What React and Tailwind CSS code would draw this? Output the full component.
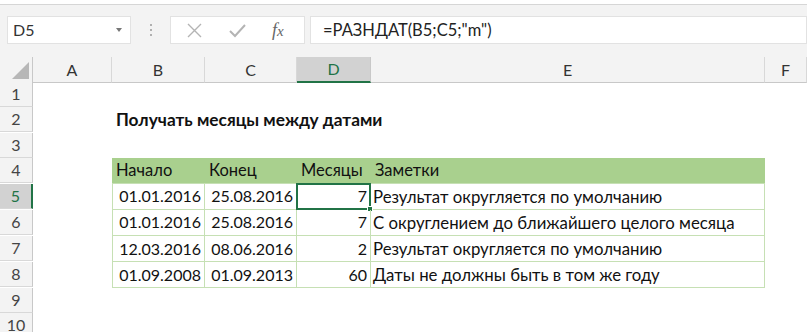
import React from 'react';

const cols = ['A', 'B', 'C', 'D', 'E', 'F'];

const rows = [
  ['01.01.2016', '25.08.2016', '7', 'Результат округляется по умолчанию'],
  ['01.01.2016', '25.08.2016', '7', 'С округлением до ближайшего целого месяца'],
  ['12.03.2016', '08.06.2016', '2', 'Результат округляется по умолчанию'],
  ['01.09.2008', '01.09.2013', '60', 'Даты не должны быть в том же году'],
];

const gridCols = 'grid grid-cols-[33px_79px_93px_92px_74px_394px_42px]';

const RowHeader = ({ n, active }) => (
  <div
    className={`h-[25px] flex items-center justify-center border-b border-[#d8d8d8] text-[16px] ${
      active
        ? 'bg-[#d2d2d2] border-r-2 border-r-[#217346] text-[#217346]'
        : 'bg-[#f3f3f3] border-r border-r-[#c8c8c8] text-[#444]'
    }`}
  >
    {n}
  </div>
);

const FormulaBar = () => (
  <div className="h-[52px] bg-[#f3f3f3] flex items-center pl-[7px] pb-[2px]">
    <div className="w-[124px] h-[28px] bg-white border border-[#e2e2e2] flex items-center justify-between pl-[5px] pr-[8px]">
      <span className="text-[16px] text-[#333]">D5</span>
      <span className="w-0 h-0 border-l-[3px] border-r-[3px] border-t-[4px] border-l-transparent border-r-transparent border-t-[#777]" />
    </div>
    <div className="w-[39px] flex flex-col items-center gap-[3px]">
      <span className="w-[2px] h-[2px] bg-[#b0b0b0]" />
      <span className="w-[2px] h-[2px] bg-[#b0b0b0]" />
      <span className="w-[2px] h-[2px] bg-[#b0b0b0]" />
    </div>
    <div className="w-[135px] h-[28px] bg-white border border-[#e2e2e2] flex items-center pl-[15px] gap-[25px]">
      <svg width="17" height="17" viewBox="0 0 17 17">
        <path d="M2 2 L15 15 M15 2 L2 15" stroke="#b4b4b4" strokeWidth="1.4" fill="none" />
      </svg>
      <svg width="19" height="17" viewBox="0 0 19 17">
        <path d="M2 9 L7 14 L17 3" stroke="#b4b4b4" strokeWidth="2" fill="none" />
      </svg>
      <span className="text-[18px] italic text-[#666] font-['Liberation_Serif',serif] leading-none">
        f<span className="text-[15px]">x</span>
      </span>
    </div>
    <div className="ml-[5px] flex-1 h-[28px] bg-white border border-[#e2e2e2] flex items-center pl-[12px]">
      <span className="text-[16.5px] text-[#222]">=РАЗНДАТ(B5;C5;"m")</span>
    </div>
  </div>
);

const ColumnHeaders = () => (
  <div className={`${gridCols} h-[25px]`}>
    <div className="bg-[#f3f3f3] border-r border-b border-[#c8c8c8] flex items-end justify-end p-[3px]">
      <svg width="17" height="17" viewBox="0 0 17 17">
        <path d="M17 0 L17 17 L0 17 Z" fill="#b7b7b7" />
      </svg>
    </div>
    {cols.map((c) => (
      <div
        key={c}
        className={`flex items-center justify-center text-[16px] border-r ${
          c === 'D'
            ? 'bg-[#d2d2d2] border-b-2 border-b-[#217346] text-[#217346] border-r-[#c8c8c8]'
            : 'bg-[#f3f3f3] border-b border-b-[#c8c8c8] text-[#333] border-r-[#d8d8d8]'
        }`}
      >
        {c}
      </div>
    ))}
  </div>
);

export default function App() {
  return (
    <div className="w-[807px] h-[332px] overflow-hidden bg-white font-['Lato','Noto_Sans',sans-serif]">
      <div className="h-[5px] bg-white border-b border-[#d6d6d6]" />
      <FormulaBar />
      <ColumnHeaders />

      {/* rows 1-3 */}
      <div className={gridCols}>
        <RowHeader n={1} />
        <div className="col-span-6" />
      </div>
      <div className={gridCols}>
        <RowHeader n={2} />
        <div />
        <div className="col-span-5 flex items-center pl-[4px] text-[17.3px] font-bold text-[#111] whitespace-nowrap">
          Получать месяцы между датами
        </div>
      </div>
      <div className={gridCols}>
        <RowHeader n={3} />
        <div className="col-span-6" />
      </div>

      {/* table header */}
      <div className={gridCols}>
        <RowHeader n={4} />
        <div />
        {['Начало', 'Конец', 'Месяцы', 'Заметки'].map((h) => (
          <div
            key={h}
            className="bg-[#a9d08e] flex items-center pl-[4px] text-[16.5px] text-[#111] border-b border-[#c6e0b4] first:border-l"
          >
            {h}
          </div>
        ))}
        <div />
      </div>

      {rows.map((r, i) => (
        <div key={i} className={gridCols}>
          <RowHeader n={5 + i} active={i === 0} />
          <div />
          <div className="border-l border-r border-b border-[#c6e0b4] flex items-center justify-end pr-[3px] text-[16px] text-[#111]">
            {r[0]}
          </div>
          <div className="border-r border-b border-[#c6e0b4] flex items-center justify-end pr-[3px] text-[16px] text-[#111]">
            {r[1]}
          </div>
          <div className="relative border-r border-b border-[#c6e0b4] flex items-center justify-end pr-[3px] text-[16px] text-[#111]">
            {r[2]}
            {i === 0 && (
              <>
                <div className="absolute -left-px -top-px -right-px -bottom-px border-2 border-[#217346]" />
                <div className="absolute -right-[3px] -bottom-[3px] w-[6px] h-[6px] bg-[#217346] border border-white" />
              </>
            )}
          </div>
          <div className="border-r border-b border-[#c6e0b4] flex items-center pl-[2px] text-[16.8px] text-[#111] whitespace-nowrap">
            {r[3]}
          </div>
          <div />
        </div>
      ))}

      <div className={gridCols}>
        <RowHeader n={9} />
        <div className="col-span-6" />
      </div>
      <div className={gridCols}>
        <RowHeader n={10} />
        <div className="col-span-6" />
      </div>
    </div>
  );
}
